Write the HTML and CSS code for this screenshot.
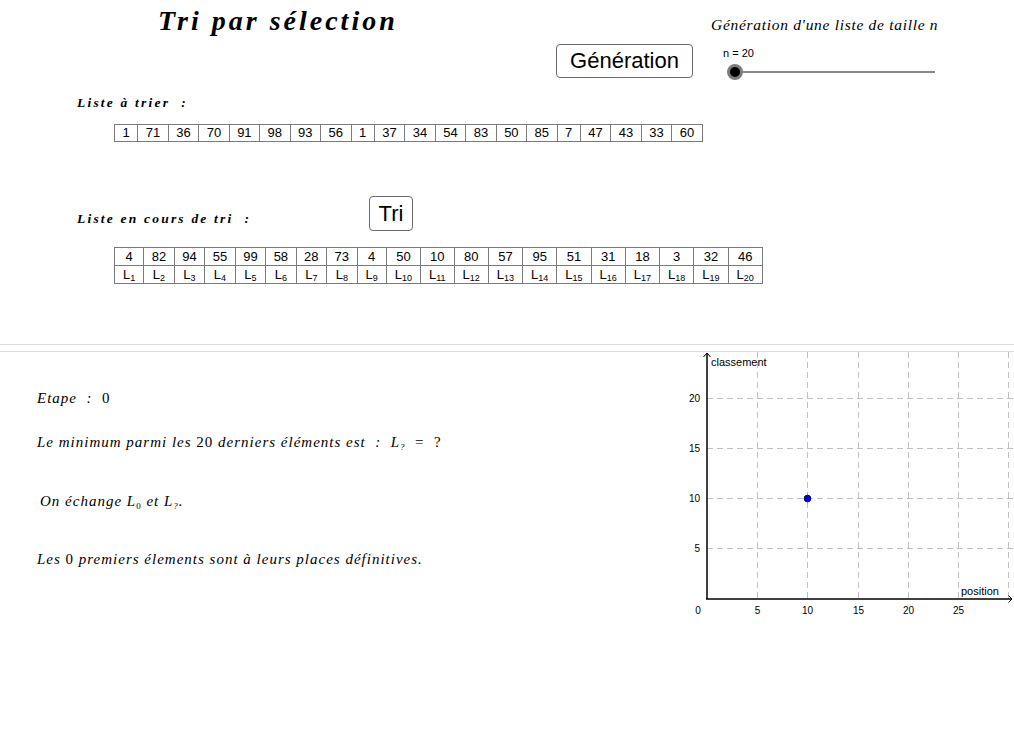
FILE: index.html
```html
<!DOCTYPE html>
<html lang="fr">
<head>
<meta charset="utf-8">
<title>Tri par sélection</title>
<link rel="stylesheet" href="styles.css">
</head>
<body>
<div class="top">
  <div class="head">
    <h1 class="title">Tri par sélection</h1>
    <p class="caption">Génération d'une liste de taille n</p>
  </div>
  <div class="gen-row">
    <button class="btn btn-gen">Génération</button>
    <div class="slider">
      <div class="slider-label">n = 20</div>
      <div class="track"><span class="knob"></span></div>
    </div>
  </div>
  <div class="label-row"><span class="mlabel">Liste à trier&nbsp; :</span></div>
  <table class="list list1">
    <tr><td>1</td><td>71</td><td>36</td><td>70</td><td>91</td><td>98</td><td>93</td><td>56</td><td>1</td><td>37</td><td>34</td><td>54</td><td>83</td><td>50</td><td>85</td><td>7</td><td>47</td><td>43</td><td>33</td><td>60</td></tr>
  </table>
  <div class="label-row2">
    <span class="mlabel mlabel2">Liste en cours de tri&nbsp; :</span>
    <button class="btn btn-tri">Tri</button>
  </div>
  <table class="list list2">
    <tr class="vals"><td>4</td><td>82</td><td>94</td><td>55</td><td>99</td><td>58</td><td>28</td><td>73</td><td>4</td><td>50</td><td>10</td><td>80</td><td>57</td><td>95</td><td>51</td><td>31</td><td>18</td><td>3</td><td>32</td><td>46</td></tr>
    <tr class="idx"><td>L<sub>1</sub></td><td>L<sub>2</sub></td><td>L<sub>3</sub></td><td>L<sub>4</sub></td><td>L<sub>5</sub></td><td>L<sub>6</sub></td><td>L<sub>7</sub></td><td>L<sub>8</sub></td><td>L<sub>9</sub></td><td>L<sub>10</sub></td><td>L<sub>11</sub></td><td>L<sub>12</sub></td><td>L<sub>13</sub></td><td>L<sub>14</sub></td><td>L<sub>15</sub></td><td>L<sub>16</sub></td><td>L<sub>17</sub></td><td>L<sub>18</sub></td><td>L<sub>19</sub></td><td>L<sub>20</sub></td></tr>
  </table>
</div>
<div class="sep"></div>
<div class="bottom">
  <div class="steps">
    <p class="step s1">Etape&nbsp; :&nbsp; <span class="up">0</span></p>
    <p class="step s2">Le minimum parmi les <span class="up">20</span> derniers éléments est&nbsp; :&nbsp; L<sub>?</sub>&nbsp; <span class="up">=&nbsp; ?</span></p>
    <p class="step s3">On échange L<sub class="up">0</sub> et L<sub>?</sub>.</p>
    <p class="step s4">Les <span class="up">0</span> premiers élements sont à leurs places définitives.</p>
  </div>
  <svg class="graph" width="334" height="388" viewBox="0 0 334 388" xmlns="http://www.w3.org/2000/svg">
    <g stroke="#c0c0c0" stroke-width="1" stroke-dasharray="6 4" fill="none">
      <line x1="77.5" y1="0" x2="77.5" y2="247"/>
      <line x1="127.5" y1="0" x2="127.5" y2="247"/>
      <line x1="178.5" y1="0" x2="178.5" y2="247"/>
      <line x1="228.5" y1="0" x2="228.5" y2="247"/>
      <line x1="278.5" y1="0" x2="278.5" y2="247"/>
      <line x1="328.5" y1="0" x2="328.5" y2="247"/>
      <line x1="27" y1="46.5" x2="334" y2="46.5"/>
      <line x1="27" y1="96.5" x2="334" y2="96.5"/>
      <line x1="27" y1="146.5" x2="334" y2="146.5"/>
      <line x1="27" y1="196.5" x2="334" y2="196.5"/>
    </g>
    <g stroke="#000" fill="none">
      <line x1="27" y1="247" x2="27" y2="1" stroke-width="1.5"/>
      <line x1="26" y1="247" x2="332" y2="247" stroke-width="1.5"/>
      <path d="M23.5 5 L27 1 L30.5 5" stroke-width="1"/>
      <path d="M328.5 243.5 L332 247 L328.5 250.5" stroke-width="1"/>
    </g>
    <g font-family="Liberation Sans, Arial, sans-serif" font-size="10" fill="#000">
      <text x="20" y="49.5" text-anchor="end">20</text>
      <text x="20" y="99.5" text-anchor="end">15</text>
      <text x="20" y="149.5" text-anchor="end">10</text>
      <text x="20" y="199.5" text-anchor="end">5</text>
      <text x="18" y="261.5" text-anchor="middle">0</text>
      <text x="77.5" y="261.5" text-anchor="middle">5</text>
      <text x="127.5" y="261.5" text-anchor="middle">10</text>
      <text x="178.5" y="261.5" text-anchor="middle">15</text>
      <text x="228.5" y="261.5" text-anchor="middle">20</text>
      <text x="278.5" y="261.5" text-anchor="middle">25</text>
    </g>
    <g font-family="Liberation Sans, Arial, sans-serif" font-size="11" fill="#000">
      <text x="31" y="14">classement</text>
      <text x="281" y="243">position</text>
    </g>
    <circle cx="127.5" cy="146.5" r="3.3" fill="#0000ee" stroke="#000044" stroke-width="1"/>
  </svg>
</div>
</body>
</html>
```

FILE: styles.css
```css
html, body {
  margin: 0;
  padding: 0;
  background: #fff;
  color: #000;
}

body {
  width: 1014px;
  height: 740px;
  overflow: hidden;
  font-family: "Liberation Sans", Arial, sans-serif;
}

.top {
  height: 344px;
}

.head {
  display: grid;
  grid-template-columns: 158px 553px auto;
  align-items: baseline;
  padding-top: 6px;
  height: 30px;
}

.title {
  grid-column: 2;
  margin: 0;
  font-family: "Liberation Serif", "Times New Roman", serif;
  font-style: italic;
  font-weight: bold;
  font-size: 28px;
  line-height: 30px;
  letter-spacing: 3px;
  white-space: nowrap;
}

.caption {
  grid-column: 3;
  margin: 0;
  font-family: "Liberation Serif", "Times New Roman", serif;
  font-style: italic;
  font-size: 15.5px;
  line-height: 18px;
  letter-spacing: 0.7px;
  white-space: nowrap;
}

.gen-row {
  display: flex;
  align-items: flex-start;
  margin-top: 8px;
  padding-left: 556px;
  height: 34px;
}

.btn {
  box-sizing: border-box;
  background: #fff;
  border: 1.5px solid #6a6a6a;
  border-radius: 4px;
  font-family: "Liberation Sans", Arial, sans-serif;
  color: #000;
  padding: 0;
  margin: 0;
}

.btn-gen {
  width: 137px;
  height: 34px;
  font-size: 22px;
  line-height: 30px;
}

.slider {
  margin-left: 30px;
  width: 212px;
}

.slider-label {
  font-size: 11px;
  line-height: 14px;
  margin-top: 2px;
}

.track {
  position: relative;
  margin-top: 11px;
  margin-left: 12px;
  width: 200px;
  height: 2px;
  background: #8a8a8a;
}

.knob {
  position: absolute;
  left: -8px;
  top: -7px;
  box-sizing: border-box;
  width: 16px;
  height: 16px;
  border-radius: 50%;
  background: #000;
  border: 3px solid #7d7d7d;
}

.label-row {
  margin-top: 15px;
  padding-left: 77px;
  height: 16px;
}

.mlabel {
  font-family: "Liberation Serif", "Times New Roman", serif;
  font-style: italic;
  font-weight: bold;
  font-size: 13.5px;
  line-height: 16px;
  letter-spacing: 2.2px;
  white-space: nowrap;
}

.list {
  border-collapse: collapse;
  margin-left: 114px;
  font-family: "Liberation Sans", Arial, sans-serif;
  font-size: 13px;
}

.list td {
  border: 1px solid #7a7a7a;
  padding: 0 7.5px;
  text-align: center;
  white-space: nowrap;
}

.list1 {
  margin-top: 15px;
}

.list1 td {
  height: 16px;
  line-height: 16px;
}

.label-row2 {
  display: flex;
  align-items: flex-start;
  margin-top: 54px;
  padding-left: 77px;
  height: 35px;
}

.mlabel2 {
  display: block;
  width: 292px;
  margin-top: 15px;
}

.btn-tri {
  width: 44px;
  height: 35px;
  font-size: 22px;
  line-height: 31px;
}

.list2 {
  margin-top: 16px;
}

.list2 .vals td {
  height: 17px;
  line-height: 17px;
}

.list2 .idx td {
  height: 17px;
  line-height: 17px;
  padding: 0 8px;
}

.list2 sub {
  font-size: 9px;
  line-height: 0;
  vertical-align: -2px;
}

.sep {
  box-sizing: border-box;
  height: 8px;
  border-top: 1px solid #dcdcdc;
  border-bottom: 1px solid #dcdcdc;
}

.bottom {
  display: flex;
  align-items: flex-start;
}

.steps {
  width: 680px;
  padding-top: 36px;
}

.step {
  margin: 0;
  font-family: "Liberation Serif", "Times New Roman", serif;
  font-style: italic;
  font-size: 15px;
  line-height: 20px;
  letter-spacing: 1px;
  padding-left: 37px;
  white-space: nowrap;
}

.step sub {
  font-size: 9px;
  line-height: 0;
  vertical-align: -3px;
}

.up {
  font-style: normal;
}

.s2 {
  margin-top: 24px;
}

.s3 {
  margin-top: 39px;
  padding-left: 40px;
}

.s4 {
  margin-top: 38px;
}

.graph {
  display: block;
  width: 334px;
  height: 388px;
}
```
